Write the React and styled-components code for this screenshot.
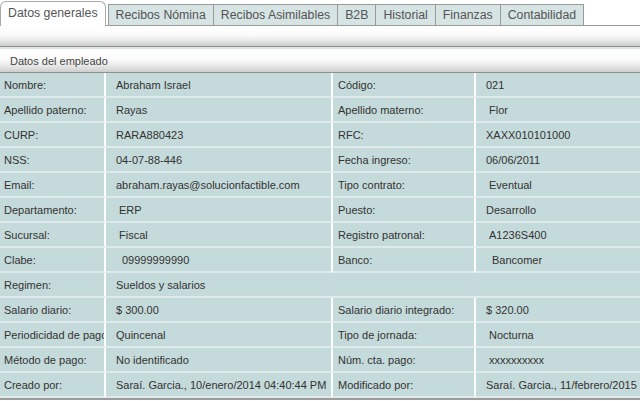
import React from "react";
import styled, { createGlobalStyle } from "styled-components";

const Global = createGlobalStyle`
  html, body { margin: 0; padding: 0; background: #fff; }
  body { font-family: "Liberation Sans", Arial, sans-serif; }
`;

const Page = styled.div`
  width: 640px;
  overflow: hidden;
`;

const TabStrip = styled.div`
  display: flex;
  align-items: flex-end;
  height: 25px;
  border-bottom: 1px solid #9a9a9a;
`;

const Tab = styled.div`
  box-sizing: border-box;
  display: flex;
  align-items: center;
  justify-content: center;
  font-size: 12.3px;
  color: #555;
  white-space: nowrap;
  padding: 0 7px;
  border: 1px solid ${(p) => (p.$active ? "#a8a8a8" : "#9a9a9a")};
  border-bottom: none;
  margin-left: ${(p) => (p.$first ? 0 : -1)}px;
  height: ${(p) => (p.$active ? 25 : 21)}px;
  margin-bottom: ${(p) => (p.$active ? -1 : 0)}px;
  background: ${(p) => (p.$active ? "#fff" : "#d6e4e4")};
  border-radius: ${(p) => (p.$active ? "6px 6px 0 0" : "0")};
  position: relative;
  z-index: ${(p) => (p.$active ? 1 : 0)};
  padding-bottom: ${(p) => (p.$active ? 2 : 1)}px;
  margin-right: ${(p) => (p.$active ? 2 : 0)}px;
`;

const GlossBar = styled.div`
  box-sizing: border-box;
  height: ${(p) => p.$h}px;
  background: linear-gradient(#ffffff 0%, #fbfbfb 45%, #e6e6e6 75%, #cdcdcd 100%);
  border-bottom: 1px solid #8f8f8f;
  display: flex;
  align-items: center;
  padding-left: 10px;
  font-size: 11px;
  color: #444;
`;

const Spacer = styled.div`
  height: 2px;
  background: #dbe6e6;
`;

const Table = styled.div`
  display: grid;
  grid-template-columns: 106px 227px 143px 1fr;
  grid-auto-rows: 25px;
  border-bottom: 2px solid #9c9c9c;
`;

const Cell = styled.div`
  box-sizing: border-box;
  display: flex;
  align-items: center;
  background: #c5dada;
  border-bottom: 2px solid #dfeaea;
  border-right: ${(p) => (p.$last ? "none" : "2px solid #fbfdfd")};
  padding-left: ${(p) => p.$pad}px;
  padding-top: 1px;
  grid-column: span ${(p) => p.$span || 1};
  font-size: 11px;
  color: #333;
  white-space: nowrap;
  overflow: hidden;
`;

const tabs = [
  "Datos generales",
  "Recibos Nómina",
  "Recibos Asimilables",
  "B2B",
  "Historial",
  "Finanzas",
  "Contabilidad",
];

const rows = [
  ["Nombre:", "Abraham Israel", "Código:", "021"],
  ["Apellido paterno:", "Rayas", "Apellido materno:", " Flor"],
  ["CURP:", "RARA880423", "RFC:", "XAXX010101000"],
  ["NSS:", "04-07-88-446", "Fecha ingreso:", "06/06/2011"],
  ["Email:", "abraham.rayas@solucionfactible.com", "Tipo contrato:", " Eventual"],
  ["Departamento:", " ERP", "Puesto:", "Desarrollo"],
  ["Sucursal:", " Fiscal", "Registro patronal:", " A1236S400"],
  ["Clabe:", "  09999999990", "Banco:", "  Bancomer"],
  ["Regimen:", "Sueldos y salarios"],
  ["Salario diario:", "$ 300.00", "Salario diario integrado:", "$ 320.00"],
  ["Periodicidad de pago", "Quincenal", "Tipo de jornada:", " Nocturna"],
  ["Método de pago:", "No identificado", "Núm. cta. pago:", " xxxxxxxxxx"],
  ["Creado por:", "Saraí. Garcia., 10/enero/2014 04:40:44 PM", "Modificado por:", "Saraí. Garcia., 11/febrero/2015"],
];

const pads = [4, 10, 5, 10];

function lead(text) {
  const m = text.match(/^ */)[0].length;
  return [m * 3, text.trim()];
}

export default function App() {
  return (
    <Page>
      <Global />
      <TabStrip>
        {tabs.map((t, i) => (
          <Tab key={t} $active={i === 0} $first={i <= 1}>
            {t}
          </Tab>
        ))}
      </TabStrip>
      <GlossBar $h={21} />
      <Spacer />
      <GlossBar $h={24}>Datos del empleado</GlossBar>
      <Table>
        {rows.map((r, ri) =>
          r.map((c, ci) => {
            const [extra, txt] = lead(c);
            const span = r.length === 2 && ci === 1 ? 3 : 1;
            const last = ci === r.length - 1;
            return (
              <Cell key={ri + "-" + ci} $pad={pads[ci] + extra} $span={span} $last={last}>
                {txt}
              </Cell>
            );
          })
        )}
      </Table>
    </Page>
  );
}
